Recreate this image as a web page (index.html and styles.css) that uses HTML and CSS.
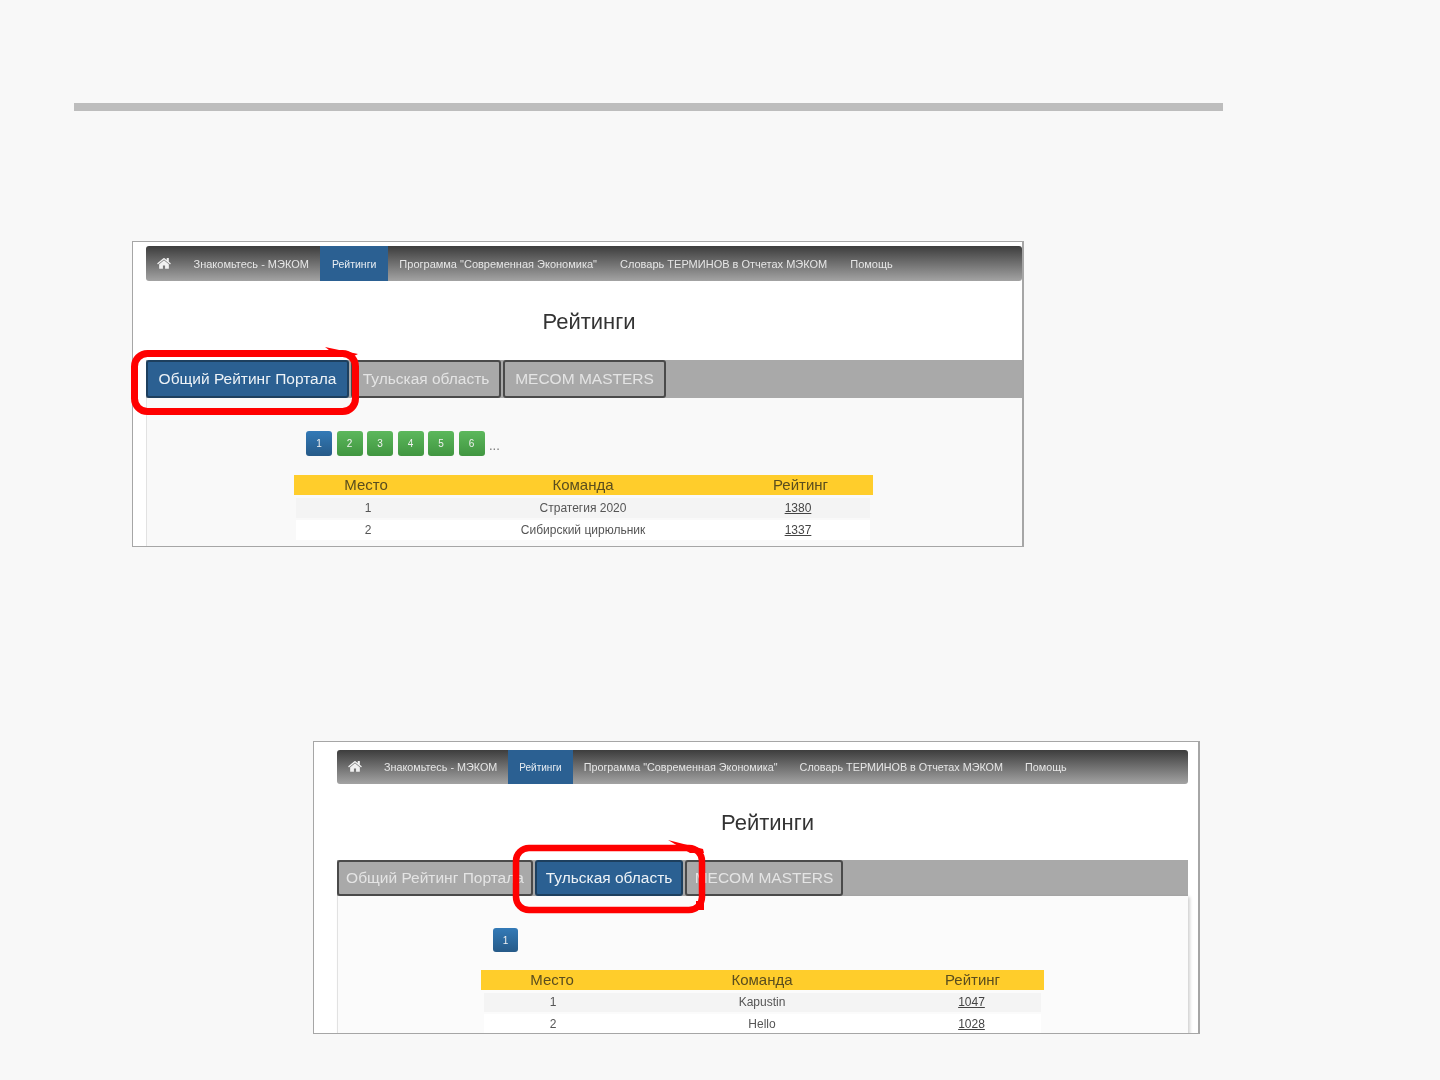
FILE: index.html
```html
<!DOCTYPE html>
<html lang="ru">
<head>
<meta charset="utf-8">
<title>Рейтинги</title>
<link rel="stylesheet" href="styles.css">
</head>
<body>
<main class="slide">
  <div class="rule"></div>

  <section class="shot shot-a">
    <div class="shot-inner">
      <nav class="nav">
        <a class="nav-home"><svg class="home-icon" viewBox="0 0 1664 1408"><path d="M1408 736v480q0 26-19 45t-45 19h-384v-384h-256v384h-384q-26 0-45-19t-19-45v-480q0-1 .5-3t.5-3l575-474 575 474q1 2 1 6zm223-69l-62 74q-8 9-21 11h-3q-13 0-21-7l-692-577-692 577q-12 8-24 7-13-2-21-11l-62-74q-8-10-7-23.500t11-21.500l719-599q32-26 76-26t76 26l244 204v-195q0-14 9-23t23-9h192q14 0 23 9t9 23v408l219 182q10 8 11 21.500t-7 23.500z"/></svg></a>
        <a class="nav-link">Знакомьтесь - МЭКОМ</a>
        <a class="nav-link active">Рейтинги</a>
        <a class="nav-link">Программа "Современная Экономика"</a>
        <a class="nav-link">Словарь ТЕРМИНОВ в Отчетах МЭКОМ</a>
        <a class="nav-link">Помощь</a>
      </nav>
      <h1 class="title">Рейтинги</h1>
      <div class="tabs">
        <a class="tab active">Общий Рейтинг Портала</a>
        <a class="tab">Тульская область</a>
        <a class="tab">MECOM MASTERS</a>
      </div>
      <div class="panel">
        <div class="pager">
          <a class="page current">1</a>
          <a class="page">2</a>
          <a class="page">3</a>
          <a class="page">4</a>
          <a class="page">5</a>
          <a class="page">6</a>
          <span class="dots">...</span>
        </div>
        <div class="table">
          <div class="thead"><span>Место</span><span>Команда</span><span>Рейтинг</span></div>
          <div class="row odd"><span>1</span><span>Стратегия 2020</span><a>1380</a></div>
          <div class="row"><span>2</span><span>Сибирский цирюльник</span><a>1337</a></div>
        </div>
      </div>
    </div>
    <svg class="mark mark-a" viewBox="0 0 232 72"><rect x="4.500" y="8.500" width="221" height="58" rx="13"/><path class="spike" d="M195 2 L228 9 L222 12 L208 12Z"/></svg>
  </section>

  <section class="shot shot-b">
    <div class="shot-inner">
      <nav class="nav">
        <a class="nav-home"><svg class="home-icon" viewBox="0 0 1664 1408"><path d="M1408 736v480q0 26-19 45t-45 19h-384v-384h-256v384h-384q-26 0-45-19t-19-45v-480q0-1 .5-3t.5-3l575-474 575 474q1 2 1 6zm223-69l-62 74q-8 9-21 11h-3q-13 0-21-7l-692-577-692 577q-12 8-24 7-13-2-21-11l-62-74q-8-10-7-23.500t11-21.500l719-599q32-26 76-26t76 26l244 204v-195q0-14 9-23t23-9h192q14 0 23 9t9 23v408l219 182q10 8 11 21.500t-7 23.500z"/></svg></a>
        <a class="nav-link">Знакомьтесь - МЭКОМ</a>
        <a class="nav-link active">Рейтинги</a>
        <a class="nav-link">Программа "Современная Экономика"</a>
        <a class="nav-link">Словарь ТЕРМИНОВ в Отчетах МЭКОМ</a>
        <a class="nav-link">Помощь</a>
      </nav>
      <h1 class="title">Рейтинги</h1>
      <div class="tabs">
        <a class="tab">Общий Рейтинг Портала</a>
        <a class="tab active">Тульская область</a>
        <a class="tab">MECOM MASTERS</a>
      </div>
      <div class="panel">
        <div class="pager">
          <a class="page current">1</a>
        </div>
        <div class="table">
          <div class="thead"><span>Место</span><span>Команда</span><span>Рейтинг</span></div>
          <div class="row odd"><span>1</span><span>Kapustin</span><a>1047</a></div>
          <div class="row"><span>2</span><span>Hello</span><a>1028</a></div>
        </div>
      </div>
    </div>
    <svg class="mark mark-b" viewBox="0 0 196 76"><rect x="4" y="9" width="186" height="62" rx="13"/><path class="spike" d="M156 1 L191 10 L192 14 L178 14Z"/><path class="spike" d="M184 62 H192 V71 H184Z"/></svg>
  </section>
</main>
</body>
</html>
```

FILE: styles.css
```css
* { box-sizing: border-box; }

html, body { margin: 0; padding: 0; }

body {
  background: #f8f8f8;
  font-family: "Liberation Sans", Arial, sans-serif;
}

.slide {
  width: 1440px;
  height: 1080px;
  padding-top: 103px;
  overflow: hidden;
}

.rule {
  width: 1149px;
  height: 8px;
  margin-left: 74px;
  background: #bdbdbd;
}

.shot {
  position: relative;
  background: #fff;
  border: 1px solid #a6a6a6;
  border-right-width: 2px;
}

.shot-a {
  width: 892px;
  height: 306px;
  margin: 130px 0 0 132px;
}

.shot-b {
  width: 887px;
  height: 293px;
  margin: 194px 0 0 313px;
}

.shot-inner {
  height: 100%;
  overflow: hidden;
  filter: blur(0.35px);
}

.shot-a .shot-inner { padding: 4px 0 0 13px; }
.shot-b .shot-inner { padding: 8px 0 0 23px; }

/* navbar */
.nav {
  display: flex;
  align-items: stretch;
  border-radius: 3px;
  background: linear-gradient(#3d3d3d, #a3a3a3);
  font-size: 11px;
}

.shot-a .nav { width: 876px; height: 35px; }
.shot-b .nav { width: 851px; height: 34px; }

.nav-home {
  display: flex;
  align-items: center;
  padding: 0 11px;
}

.home-icon {
  width: 14px;
  height: 12px;
  fill: #f0f0f0;
}

.nav-link {
  display: flex;
  align-items: center;
  padding: 0 11.500px;
  color: #e6e6e6;
  white-space: nowrap;
}

.shot-b .nav-link { padding: 0 11px; font-size: 10.800px; }

.nav-link.active {
  background: #2b6092;
  color: #e8edf2;
}

.shot-a .nav-link.active { font-size: 10.500px; }
.shot-b .nav-link.active { font-size: 10px; }

/* heading */
.title {
  margin: 0;
  padding: 2px 0 0 10px;
  display: flex;
  align-items: center;
  justify-content: center;
  font-size: 22px;
  font-weight: 400;
  color: #333;
}

.shot-a .title { width: 876px; height: 79px; }
.shot-b .title { width: 851px; height: 76px; padding: 2px 0 0 10px; }

/* tabs */
.tabs {
  display: flex;
  gap: 2px;
  background: #a9a9a9;
}

.shot-a .tabs { width: 876px; height: 38px; }
.shot-b .tabs { width: 851px; height: 36px; }

.tab {
  display: flex;
  align-items: center;
  justify-content: center;
  border: 2px solid #4a4a4a;
  border-radius: 3px;
  background: #a9a9a9;
  color: #e4e4e4;
  font-size: 15.500px;
  white-space: nowrap;
}

.tab.active {
  background: #2b6092;
  border-color: #1d3f5e;
  color: #eef3f7;
}

.shot-a .tab:nth-child(1) { width: 203px; }
.shot-a .tab:nth-child(2) { width: 150px; }
.shot-a .tab:nth-child(3) { width: 163px; }
.shot-b .tab:nth-child(1) { width: 196px; }
.shot-b .tab:nth-child(2) { width: 148px; }
.shot-b .tab:nth-child(3) { width: 158px; }

/* panel */
.panel {
  border-left: 1px solid #e2e2e2;
  height: 200px;
}

.shot-a .panel { width: 876px; padding-top: 33px; background: #f9f9f9; }
.shot-b .panel {
  width: 851px;
  padding-top: 32px;
  background: #fbfbfb;
  box-shadow: 2px 1px 3px rgba(0, 0, 0, 0.18);
}

.pager {
  display: flex;
  align-items: flex-end;
  gap: 4.500px;
}

.shot-a .pager { margin-left: 159px; height: 25px; }
.shot-b .pager { margin-left: 155px; height: 24px; }

.page {
  display: flex;
  align-items: center;
  justify-content: center;
  height: 100%;
  border-radius: 3px;
  background: linear-gradient(#5cb85c, #419641);
  color: #f2f2f2;
  font-size: 10px;
}

.shot-a .page { width: 26px; }
.shot-b .page { width: 25px; }

.page.current { background: linear-gradient(#337ab7, #265a88); }

.dots {
  color: #777;
  font-size: 13px;
  line-height: 20px;
  margin-left: 0;
}

/* table */
.table { color: #555; }

.shot-a .table { margin: 19px 0 0 147px; width: 579px; }
.shot-b .table { margin: 18px 0 0 143px; width: 563px; }

.thead {
  display: grid;
  background: #ffcd2b;
  color: #5a4d1e;
  font-size: 15px;
  text-align: center;
  line-height: 20px;
  height: 20px;
}

.shot-a .thead { grid-template-columns: 144px 290px 145px; }
.shot-b .thead { grid-template-columns: 142px 278px 143px; }

.row {
  display: grid;
  align-items: center;
  background: #fff;
  font-size: 12px;
  text-align: center;
  margin-top: 2.500px;
}

.shot-a .row { height: 20px; width: 574px; margin-left: 2px; grid-template-columns: 144px 286px 144px; }
.shot-b .row { height: 19px; width: 557px; margin-left: 3px; grid-template-columns: 138px 280px 139px; }

.row.odd { background: #f4f4f4; }

.row a {
  color: #444;
  text-decoration: underline;
}

/* red highlight */
.mark {
  position: absolute;
  overflow: visible;
  fill: none;
  stroke: #ff0000;
}

.mark rect { stroke-width: 7; }
.spike { fill: #ff0000; stroke: none; }

.mark-a { left: -3px; top: 103px; width: 232px; height: 72px; }
.mark-b { left: 198px; top: 97px; width: 196px; height: 76px; }
.mark-b rect { stroke-width: 6.500; }
```
